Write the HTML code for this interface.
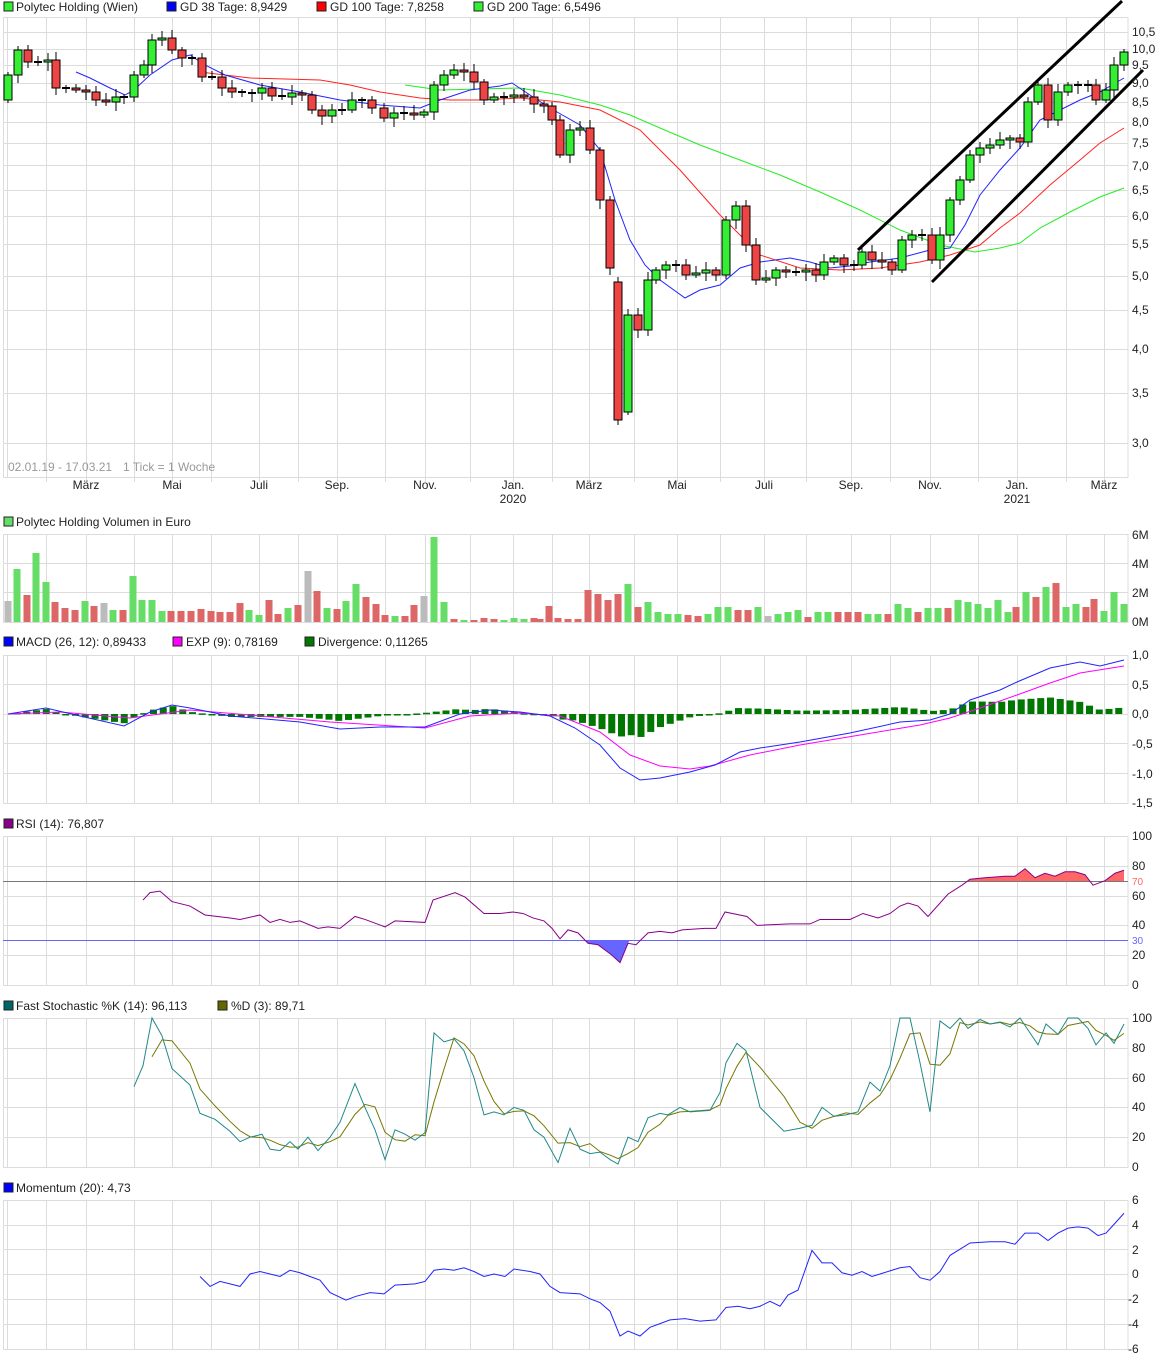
<!DOCTYPE html>
<html><head><meta charset="utf-8"><style>
body{margin:0;background:#fff}
svg{display:block;font-family:"Liberation Sans",sans-serif;font-size:12px}
</style></head><body>
<svg id="s" width="1175" height="1361" xmlns="http://www.w3.org/2000/svg">
<rect width="1175" height="1361" fill="#fff"/>
<g id="grid" stroke="#dcdcdc" stroke-width="1" fill="none"></g>
<g id="plots"></g>
<g fill="#222">
<rect x="4" y="2" width="9" height="9" fill="#3e3" stroke="#222"/><text x="16" y="11">Polytec Holding (Wien)</text>
<rect x="167" y="2" width="9" height="9" fill="#00f" stroke="#222"/><text x="180" y="11">GD 38 Tage: 8,9429</text>
<rect x="317" y="2" width="9" height="9" fill="#f00" stroke="#222"/><text x="330" y="11">GD 100 Tage: 7,8258</text>
<rect x="474" y="2" width="9" height="9" fill="#3e3" stroke="#222"/><text x="487" y="11">GD 200 Tage: 6,5496</text>
<text x="8" y="471" fill="#999">02.01.19 - 17.03.21</text><text x="123" y="471" fill="#999">1 Tick = 1 Woche</text>
<g text-anchor="middle">
<text x="86" y="489">März</text><text x="172" y="489">Mai</text><text x="259" y="489">Juli</text><text x="337" y="489">Sep.</text><text x="425" y="489">Nov.</text><text x="513" y="489">Jan.</text><text x="513" y="503">2020</text><text x="589" y="489">März</text><text x="677" y="489">Mai</text><text x="764" y="489">Juli</text><text x="851" y="489">Sep.</text><text x="930" y="489">Nov.</text><text x="1017" y="489">Jan.</text><text x="1017" y="503">2021</text><text x="1104" y="489">März</text>
</g>
<g>
<text x="1132" y="36">10,5</text><text x="1132" y="53">10,0</text><text x="1132" y="69">9,5</text><text x="1132" y="87">9,0</text><text x="1132" y="106">8,5</text><text x="1132" y="126">8,0</text><text x="1132" y="147">7,5</text><text x="1132" y="170">7,0</text><text x="1132" y="194">6,5</text><text x="1132" y="220">6,0</text><text x="1132" y="248">5,5</text><text x="1132" y="280">5,0</text><text x="1132" y="314">4,5</text><text x="1132" y="353">4,0</text><text x="1132" y="397">3,5</text><text x="1132" y="447">3,0</text>
</g>
<rect x="4" y="517" width="9" height="9" fill="#6d6" stroke="#222"/><text x="16" y="526">Polytec Holding Volumen in Euro</text>
<text x="1132" y="539">6M</text><text x="1132" y="568">4M</text><text x="1132" y="597">2M</text><text x="1132" y="626">0M</text>
<rect x="4" y="637" width="9" height="9" fill="#00f" stroke="#222"/><text x="16" y="646">MACD (26, 12): 0,89433</text>
<rect x="173" y="637" width="9" height="9" fill="#f0f" stroke="#222"/><text x="186" y="646">EXP (9): 0,78169</text>
<rect x="305" y="637" width="9" height="9" fill="#070" stroke="#222"/><text x="318" y="646">Divergence: 0,11265</text>
<text x="1132" y="659">1,0</text><text x="1132" y="689">0,5</text><text x="1132" y="718">0,0</text><text x="1132" y="748">-0,5</text><text x="1132" y="778">-1,0</text><text x="1132" y="807">-1,5</text>
<rect x="4" y="819" width="9" height="9" fill="#808" stroke="#222"/><text x="16" y="828">RSI (14): 76,807</text>
<text x="1132" y="840">100</text><text x="1132" y="870">80</text><text x="1132" y="900">60</text><text x="1132" y="929">40</text><text x="1132" y="959">20</text><text x="1132" y="989">0</text>
<text x="1132" y="885" fill="#f66" font-size="10">70</text><text x="1132" y="944" fill="#66f" font-size="10">30</text>
<rect x="4" y="1001" width="9" height="9" fill="#066" stroke="#222"/><text x="16" y="1010">Fast Stochastic %K (14): 96,113</text>
<rect x="218" y="1001" width="9" height="9" fill="#660" stroke="#222"/><text x="231" y="1010">%D (3): 89,71</text>
<text x="1132" y="1022">100</text><text x="1132" y="1052">80</text><text x="1132" y="1082">60</text><text x="1132" y="1111">40</text><text x="1132" y="1141">20</text><text x="1132" y="1171">0</text>
<rect x="4" y="1183" width="9" height="9" fill="#00f" stroke="#222"/><text x="16" y="1192">Momentum (20): 4,73</text>
<text x="1132" y="1204">6</text><text x="1132" y="1229">4</text><text x="1132" y="1254">2</text><text x="1132" y="1278">0</text><text x="1128" y="1303">-2</text><text x="1128" y="1328">-4</text><text x="1128" y="1353">-6</text>
</g>
</svg>
<script>
var NS="http://www.w3.org/2000/svg",G=document.getElementById("grid"),P=document.getElementById("plots");
function el(p,t,a){var e=document.createElementNS(NS,t);for(var k in a)e.setAttribute(k,a[k]);p.appendChild(e);return e;}
function line(p,x1,y1,x2,y2,c,w){return el(p,"line",{x1:x1,y1:y1,x2:x2,y2:y2,stroke:c,"stroke-width":w||1});}
var vx=[46,86,134,172,211,259,298,337,385,425,470,513,552,589,634,677,720,764,806,851,890,930,978,1017,1066,1104];
var panels=[[17,477,[32,49,65,83,102,122,143,165,190,216,244,276,310,349,393,443]],[534,622,[563,592]],[655,803,[684,714,743,773]],[836,985,[866,896,925,955]],[1018,1167,[1048,1078,1107,1137]],[1200,1349,[1225,1249,1274,1299,1324]]];
panels.forEach(function(p){el(G,"rect",{x:3.5,y:p[0]+.5,width:1124.5,height:p[1]-p[0]});line(G,7.5,p[0],7.5,p[1],"#dcdcdc");
vx.forEach(function(x){line(G,x+.5,p[0],x+.5,p[1]+(p[0]==17?5:0),"#dcdcdc")});p[2].forEach(function(y){line(G,3,y+.5,1128,y+.5,"#dcdcdc")});});
function pts(a){return a.map(function(q){return q[0]+","+q[1]}).join(" ");}
function pl(a,c,w){el(P,"polyline",{points:pts(a),fill:"none",stroke:c,"stroke-width":w||1});}
pl([[405,85],[440,90],[520,88],[560,95],[600,105],[630,115],[660,128],[700,145],[740,160],[780,175],[820,192],[860,210],[900,230],[940,245],[975,252],[1000,248],[1020,243],[1040,228],[1070,212],[1100,197],[1124,188]],"#2e2");
pl([[200,72],[250,78],[320,80],[350,85],[380,92],[420,98],[450,100],[480,100],[520,98],[560,102],[600,110],[640,130],[680,170],[720,215],[760,255],[800,268],[840,270],[880,268],[920,262],[950,255],[980,245],[1000,228],[1020,213],[1050,185],[1080,160],[1100,143],[1124,128]],"#f22");
pl([[76,72],[90,78],[110,88],[125,95],[134,90],[150,75],[172,60],[190,55],[205,65],[225,75],[260,85],[300,92],[340,100],[380,105],[420,108],[440,100],[470,90],[500,86],[512,83],[530,95],[550,108],[580,125],[600,150],[615,200],[630,240],[645,265],[660,280],[685,298],[700,290],[720,285],[740,268],[760,262],[790,258],[810,262],[830,268],[850,266],[870,262],[900,258],[930,250],[950,248],[965,225],[980,195],[1000,170],[1020,148],[1040,120],[1060,110],[1080,100],[1100,92],[1124,78]],"#22f");
var C=[[8,75],[18,50],[28,62],[38,62],[48,60],[56,88],[66,88],[76,90],[86,92],[96,100],[106,102],[116,97],[124,97],[134,75],[144,65],[152,40],[162,38],[172,50],[182,58],[192,58],[202,77],[212,77],[222,88],[232,92],[242,93],[252,93],[262,88],[272,96],[282,97],[292,93],[302,95],[312,110],[322,116],[332,110],[342,110],[352,100],[362,100],[372,108],[384,118],[394,113],[404,113],[414,115],[424,112],[434,85],[444,75],[454,70],[464,72],[474,82],[484,100],[494,97],[504,97],[514,95],[524,97],[534,104],[544,106],[552,120],[560,155],[570,130],[580,128],[590,150],[600,200],[610,268],[618,420],[628,315],[638,330],[648,280],[656,270],[666,265],[676,265],[686,275],[696,273],[706,270],[716,275],[726,220],[736,206],[746,245],[756,280],[766,278],[776,270],[786,272],[796,272],[806,270],[816,275],[824,262],[834,258],[844,265],[854,265],[862,252],[872,260],[882,262],[892,270],[902,240],[912,235],[922,235],[932,260],[940,235],[950,200],[960,180],[970,155],[980,148],[990,145],[1000,140],[1010,138],[1020,142],[1028,102],[1038,85],[1048,120],[1058,92],[1068,85],[1078,85],[1088,85],[1096,100],[1106,90],[1114,65],[1124,52]];
var prev=100;
C.forEach(function(c,i){var o=prev,cl=c[1];if(i==62)o=282;if(i==63)o=412;var t=Math.min(o,cl),b=Math.max(o,cl);var up=cl<o;
line(P,c[0],t-3-(i*7)%6,c[0],b+3+(i*5)%7,"#000");
if(b-t<2)line(P,c[0]-4,t,c[0]+4,t,"#000",2);else el(P,"rect",{x:c[0]-4,y:t,width:8,height:b-t,fill:up?"#3e3":"#e44",stroke:"#000","stroke-width":1});prev=cl;});
line(P,858,250,1122,1,"#000",3);line(P,932,282,1143,70,"#000",3);
var V=[[8,21,"g"],[17,53,"G"],[27,27,"R"],[36,69,"G"],[46,40,"G"],[55,20,"R"],[65,14,"R"],[75,12,"R"],[85,21,"G"],[94,16,"R"],[104,19,"g"],[113,12,"G"],[123,12,"R"],[133,46,"G"],[142,22,"G"],[152,22,"G"],[162,11,"G"],[171,11,"R"],[181,11,"R"],[191,11,"R"],[201,13,"R"],[211,11,"R"],[220,10,"R"],[230,10,"R"],[240,19,"R"],[249,12,"G"],[259,7,"G"],[269,22,"R"],[278,8,"R"],[288,14,"G"],[298,17,"R"],[308,51,"g"],[317,31,"R"],[327,14,"G"],[337,13,"R"],[346,21,"G"],[356,38,"G"],[366,25,"R"],[376,18,"R"],[385,7,"R"],[395,6,"G"],[405,6,"R"],[414,17,"R"],[424,26,"g"],[434,85,"G"],[444,20,"G"],[454,3,"R"],[464,2,"G"],[474,2,"R"],[484,4,"R"],[494,3,"R"],[504,2,"G"],[514,4,"G"],[524,3,"G"],[534,4,"R"],[540,3,"R"],[549,16,"R"],[558,4,"R"],[568,3,"R"],[578,3,"R"],[588,32,"R"],[598,28,"R"],[608,22,"R"],[618,28,"R"],[628,38,"G"],[638,15,"R"],[648,20,"G"],[658,10,"G"],[668,8,"G"],[678,8,"G"],[688,7,"R"],[698,6,"R"],[708,8,"G"],[718,15,"G"],[728,15,"G"],[738,12,"R"],[748,12,"R"],[758,15,"G"],[768,6,"g"],[778,8,"G"],[788,10,"G"],[798,12,"G"],[808,5,"R"],[818,10,"G"],[828,10,"G"],[838,10,"R"],[848,10,"R"],[858,10,"R"],[868,8,"G"],[878,8,"G"],[888,8,"R"],[898,18,"G"],[908,14,"G"],[918,10,"R"],[928,14,"G"],[938,14,"G"],[948,14,"R"],[958,22,"G"],[968,20,"G"],[978,18,"G"],[988,14,"G"],[998,22,"G"],[1008,10,"G"],[1016,15,"R"],[1026,30,"G"],[1036,25,"R"],[1046,35,"G"],[1056,39,"R"],[1066,15,"G"],[1076,18,"G"],[1086,15,"R"],[1094,23,"R"],[1104,11,"G"],[1114,30,"G"],[1124,18,"G"]];
V.forEach(function(v){el(P,"rect",{x:v[0]-3.5,y:622-v[1],width:7,height:v[1],fill:v[2]=="G"?"#6d6":v[2]=="R"?"#d66":"#bbb"});});
var MB=[[8,714],[46,708],[80,716],[124,726],[150,712],[172,705],[190,708],[230,716],[300,722],[340,729],[380,727],[425,727],[460,714],[490,710],[520,712],[550,716],[575,728],[600,745],[620,768],[640,780],[660,778],[690,772],[715,765],[740,752],[760,748],[800,742],[850,733],[900,722],[930,720],[950,714],[970,700],[1000,690],[1017,682],[1050,668],[1080,662],[1100,666],[1124,660]];
var MP=[[8,714],[60,712],[130,718],[190,710],[250,715],[330,722],[425,728],[470,716],[520,713],[560,716],[600,732],[630,755],[660,766],[690,769],[710,766],[750,755],[800,745],[860,735],[920,725],[950,718],[980,708],[1017,695],[1050,683],[1080,673],[1124,666]];
function itp(a,x){for(var i=1;i<a.length;i++)if(x<=a[i][0]){var f=(x-a[i-1][0])/(a[i][0]-a[i-1][0]);return a[i-1][1]+f*(a[i][1]-a[i-1][1]);}return a[a.length-1][1];}
for(var x=17;x<=1124;x+=9.75){var d=(itp(MB,x)-itp(MP,x))*1.1;var h=Math.max(Math.abs(d),1.5);el(P,"rect",{x:x-3.5,y:d<0?714+d:714,width:7,height:h,fill:"#070"});}
pl(MP,"#f0f");pl(MB,"#22f");
var R=[[143,57],[150,62],[160,63],[172,56],[190,53],[205,47],[230,45],[240,44],[260,47],[270,42],[280,44],[290,42],[300,43],[318,38],[328,39],[340,38],[355,46],[365,44],[385,39],[395,43],[425,42],[433,57],[455,62],[465,59],[484,48],[500,48],[513,49],[523,48],[533,45],[544,43],[552,38],[560,31],[568,37],[578,35],[588,28],[598,27],[612,20],[620,15],[628,28],[636,27],[648,35],[660,36],[672,35],[682,37],[705,38],[716,38],[725,49],[747,46],[757,40],[790,41],[810,41],[820,44],[850,44],[863,48],[878,45],[890,48],[900,53],[908,55],[918,53],[928,46],[948,61],[962,67],[970,71],[985,72],[1005,73],[1015,73],[1025,78],[1035,72],[1045,75],[1055,73],[1065,76],[1075,76],[1085,74],[1093,67],[1105,70],[1115,75],[1124,77]];
var ry=function(v){return 985-v*1.49};
var Rp=R.map(function(q){return[q[0],ry(q[1])]});
el(P,"polygon",{points:"584,940 "+pts(Rp.filter(function(q){return q[0]>=588&&q[0]<=628}))+" 630,940",fill:"#66f"});
el(P,"polygon",{points:"968,881 "+pts(Rp.filter(function(q){return q[0]>=970&&q[0]<=1085}))+" 1090,881 1105,881 1115,"+ry(75)+" 1124,"+ry(77)+" 1124,881",fill:"#f66"});
line(P,3,881.5,1128,881.5,"#777");line(P,3,940.5,1128,940.5,"#66f");
pl(Rp,"#808");
var K=[[134,54],[143,68],[152,100],[162,88],[172,66],[190,55],[200,36],[215,32],[230,24],[240,17],[250,20],[262,22],[270,12],[280,11],[290,17],[298,12],[308,20],[318,11],[330,20],[340,30],[355,56],[365,40],[375,25],[385,5],[395,25],[405,22],[415,18],[425,23],[434,90],[444,84],[454,86],[464,78],[474,60],[484,35],[494,37],[504,35],[514,40],[524,38],[534,25],[544,20],[558,3],[570,26],[580,12],[590,9],[600,10],[610,5],[618,2],[628,20],[638,17],[648,33],[660,36],[668,35],[680,40],[690,37],[710,38],[720,50],[726,70],[737,83],[746,78],[760,40],[784,24],[800,26],[812,28],[822,40],[834,34],[846,35],[858,37],[870,57],[880,51],[890,68],[900,100],[910,100],[920,70],[930,37],[940,98],[950,93],[960,100],[968,93],[980,99],[990,96],[1000,97],[1010,94],[1020,100],[1030,90],[1038,82],[1046,96],[1058,89],[1068,100],[1078,100],[1088,93],[1096,82],[1106,90],[1114,83],[1124,96]];
var sy=function(v){return 1167-v*1.49};
var D=[];for(var i=2;i<K.length;i++)D.push([K[i][0],sy((K[i][1]+K[i-1][1]+K[i-2][1])/3)]);
pl(D,"#770");pl(K.map(function(q){return[q[0],sy(q[1])]}),"#288");
var M=[[200,-0.2],[210,-1],[220,-0.6],[230,-0.8],[240,-1],[250,0],[260,0.2],[270,0],[280,-0.2],[290,0.3],[300,0.1],[310,-0.2],[320,-0.5],[330,-1.5],[346,-2.1],[356,-1.8],[370,-1.5],[384,-1.6],[395,-0.9],[415,-0.8],[425,-0.6],[434,0.3],[444,0.4],[454,0.3],[464,0.5],[474,0.2],[484,-0.2],[494,0],[505,-0.2],[514,0.4],[530,0.2],[540,0],[550,-1],[560,-1.5],[580,-1.6],[590,-2],[600,-2.3],[610,-3],[620,-5],[628,-4.6],[640,-5],[650,-4.3],[660,-4],[670,-3.7],[685,-3.6],[700,-3.8],[716,-3.7],[726,-2.7],[738,-2.6],[750,-2.8],[760,-2.6],[770,-2.2],[780,-2.6],[788,-1.7],[798,-1.3],[812,1.9],[822,0.9],[832,0.9],[842,0.1],[852,-0.1],[862,0.2],[872,-0.2],[884,0.1],[900,0.5],[910,0.6],[920,-0.3],[930,-0.5],[940,0.2],[950,1.5],[960,2],[970,2.5],[990,2.6],[1005,2.6],[1015,2.4],[1025,3.3],[1038,3.3],[1048,2.7],[1058,3.3],[1068,3.7],[1078,3.8],[1088,3.7],[1098,3.1],[1106,3.3],[1114,4],[1124,4.9]];
pl(M.map(function(q){return[q[0],1274-q[1]*12.4]}),"#22f");
</script>
</body></html>
